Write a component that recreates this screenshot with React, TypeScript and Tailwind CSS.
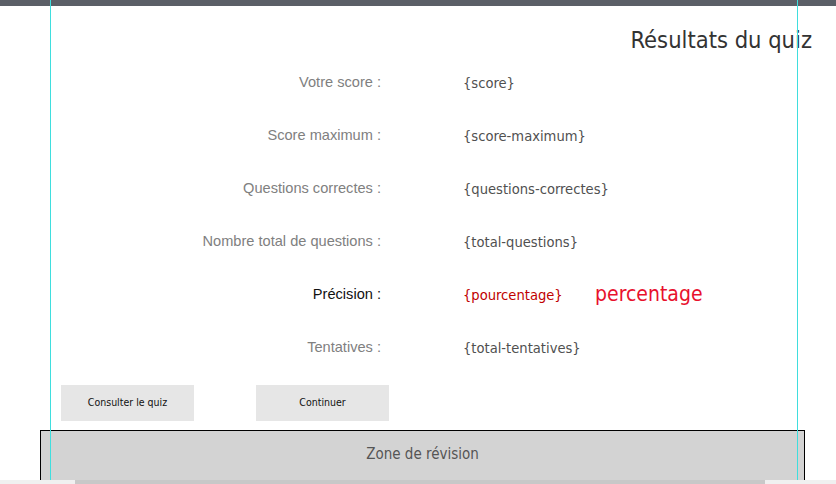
import React from 'react';

// one line of the results table
interface Row {
  label: string;
  value: string;
  highlight?: boolean; // the "Précision" line is in red
}

const rows: Row[] = [
  { label: 'Votre score :', value: '{score}' },
  { label: 'Score maximum :', value: '{score-maximum}' },
  { label: 'Questions correctes :', value: '{questions-correctes}' },
  { label: 'Nombre total de questions :', value: '{total-questions}' },
  { label: 'Précision :', value: '{pourcentage}', highlight: true },
  { label: 'Tentatives :', value: '{total-tentatives}' },
];

const App: React.FC = () => {
  return (
    <div className="relative w-[836px] h-[484px] overflow-hidden bg-white font-['Liberation_Sans',Arial,sans-serif]">
      {/* dark strip at the top */}
      <div className="h-[6px] bg-[#5b5f67]" />

      {/* title */}
      <div className="flex justify-end pt-[18px] pr-[24px]">
        <h1 className="h-[32px] leading-[32px] text-[23.5px] text-[#333] font-['DejaVu_Sans_Condensed','Liberation_Sans',sans-serif]">
          Résultats du quiz
        </h1>
      </div>

      {/* results rows */}
      <div className="flex flex-col">
        {rows.map((row) => (
          <div key={row.label} className="flex items-center h-[53px] whitespace-nowrap">
            <span
              className={`w-[381px] shrink-0 text-right text-[14.6px] ${
                row.highlight ? 'text-[#111]' : 'text-[#808080]'
              }`}
            >
              {row.label}
            </span>
            <span
              className={`ml-[82px] w-[132px] shrink-0 text-[14.6px] font-['DejaVu_Sans_Condensed','Liberation_Sans',sans-serif] ${
                row.highlight ? 'text-[#c00000]' : 'text-[#505050]'
              }`}
            >
              {row.value}
            </span>
            {row.highlight && (
              <span className="text-[21px] text-[#e8112d] font-['DejaVu_Sans_Condensed','Liberation_Sans',sans-serif]">
                percentage
              </span>
            )}
          </div>
        ))}
      </div>

      {/* buttons */}
      <div className="flex gap-[62px] pl-[61px] mt-[11px]">
        <button className="w-[133px] h-[36px] bg-[#e6e6e6] text-[10.5px] text-[#111] font-['DejaVu_Sans_Condensed','Liberation_Sans',sans-serif]">
          Consulter le quiz
        </button>
        <button className="w-[133px] h-[36px] bg-[#e6e6e6] text-[10.5px] text-[#111] font-['DejaVu_Sans_Condensed','Liberation_Sans',sans-serif]">
          Continuer
        </button>
      </div>

      {/* revision zone */}
      <div className="ml-[40px] mt-[9px] w-[765px] h-[70px] border border-black bg-[#d3d3d3] flex justify-center pt-[13px]">
        <span className="text-[15px] text-[#555] h-[20px] leading-[20px] font-['DejaVu_Sans_Condensed','Liberation_Sans',sans-serif]">
          Zone de révision
        </span>
      </div>

      {/* cyan guide lines over the page */}
      <div className="absolute top-0 bottom-0 left-[50px] w-px bg-[#3fdede]" />
      <div className="absolute top-0 bottom-0 left-[797px] w-px bg-[#3fdede]" />

      {/* horizontal scrollbar at the bottom */}
      <div className="absolute left-0 right-0 bottom-0 h-[4px] bg-[#f0f0f0]">
        <div className="absolute top-0 bottom-0 left-[75px] w-[690px] bg-[#c8c8c8]" />
      </div>
    </div>
  );
};

export default App;
